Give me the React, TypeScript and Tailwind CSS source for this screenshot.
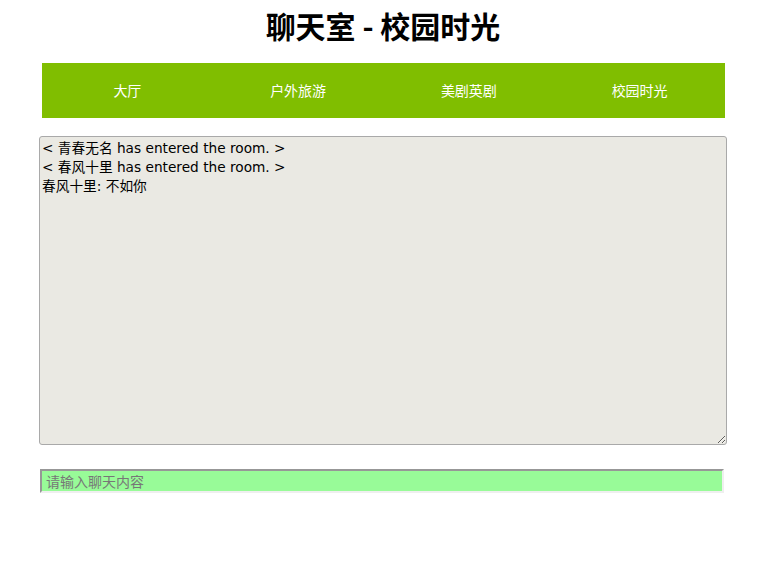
import React from "react";

const rooms = ["大厅", "户外旅游", "美剧英剧", "校园时光"];

const messages = [
  "< 青春无名 has entered the room. >",
  "< 春风十里 has entered the room. >",
  "春风十里: 不如你",
];

export default function App() {
  return (
    <div className="w-[780px] h-[561px] bg-white font-['Noto_Sans_CJK_SC',sans-serif] text-black">
      <h1 className="pt-[6px] pr-[14px] h-[63px] text-center text-[30px] leading-[38px] font-bold">
        聊天室 - 校园时光
      </h1>

      <nav className="ml-[42px] w-[683px] h-[55px] bg-[#80be00] flex">
        {rooms.map((r) => (
          <a
            key={r}
            className="flex-1 flex items-center justify-center text-white text-[14px]"
          >
            {r}
          </a>
        ))}
      </nav>

      <textarea
        readOnly
        value={messages.join("\n")}
        className="block mt-[18px] ml-[39px] w-[688px] h-[309px] bg-[#eae9e3] border border-[#a9a9a9] rounded-[3px] px-[2px] pt-[2px] text-[13.7px] leading-[19px] font-['DejaVu_Sans','Noto_Sans_CJK_SC',sans-serif] outline-none"
      />

      <input
        placeholder="请输入聊天内容"
        className="block mt-[24px] ml-[40px] w-[684px] h-[24px] bg-[#98fb98] border-2 border-t-[#979797] border-l-[#979797] border-b-[#efefef] border-r-[#efefef] px-[4px] text-[14px] leading-[20px] placeholder:text-[#777] outline-none"
      />
    </div>
  );
}
